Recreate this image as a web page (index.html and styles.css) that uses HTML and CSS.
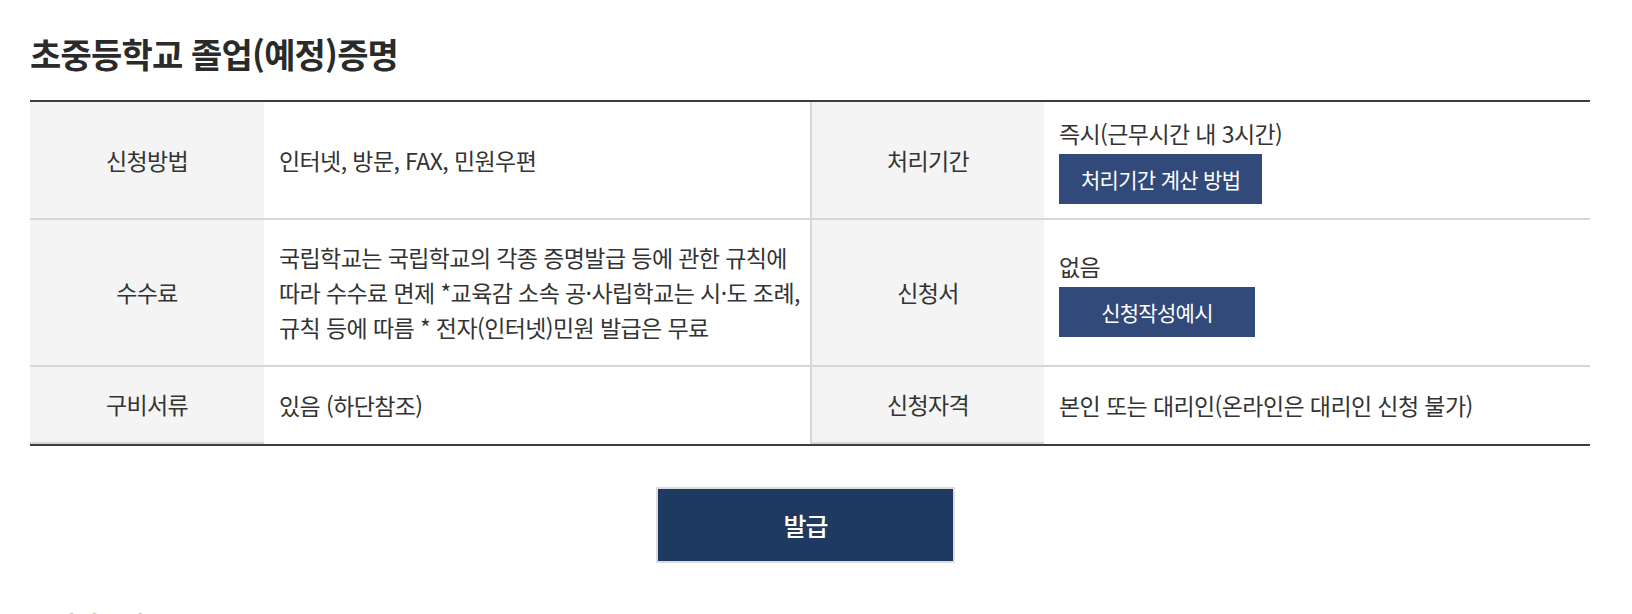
FILE: index.html
```html
<!DOCTYPE html>
<html lang="ko">
<head>
<meta charset="utf-8">
<title>초중등학교 졸업(예정)증명</title>
<link rel="stylesheet" href="styles.css">
</head>
<body>
<main class="page">
  <h2 class="title">초중등학교 졸업(예정)증명</h2>
  <table class="info">
    <colgroup>
      <col class="c-th"><col class="c-td"><col class="c-th"><col class="c-td">
    </colgroup>
    <tbody>
      <tr>
        <th>신청방법</th>
        <td>인터넷, 방문, FAX, 민원우편</td>
        <th class="th-split">처리기간</th>
        <td class="tight">
          <div class="line">즉시(근무시간 내 3시간)</div>
          <a class="sub-btn" href="#">처리기간 계산 방법</a>
        </td>
      </tr>
      <tr>
        <th>수수료</th>
        <td>국립학교는 국립학교의 각종 증명발급 등에 관한 규칙에 따라 수수료 면제 *교육감 소속 공·사립학교는 시·도 조례, 규칙 등에 따름 * 전자(인터넷)민원 발급은 무료</td>
        <th class="th-split">신청서</th>
        <td class="tight">
          <div class="line">없음</div>
          <a class="sub-btn" href="#">신청작성예시</a>
        </td>
      </tr>
      <tr class="last">
        <th>구비서류</th>
        <td>있음 (하단참조)</td>
        <th class="th-split">신청자격</th>
        <td>본인 또는 대리인(온라인은 대리인 신청 불가)</td>
      </tr>
    </tbody>
  </table>
  <div class="actions">
    <a class="issue-btn" href="#">발급</a>
  </div>
  <h3 class="section">법정근거</h3>
</main>
</body>
</html>
```

FILE: styles.css
```css
* { box-sizing: border-box; }

html, body {
  margin: 0;
  padding: 0;
  background: #fff;
}

body {
  font-family: "Noto Sans CJK KR", "Noto Sans", sans-serif;
  color: #333;
  overflow: hidden;
}

.page {
  padding: 0 42px 0 30px;
}

.title {
  margin: 0;
  padding-top: 33px;
  font-size: 34px;
  line-height: 42px;
  font-weight: 700;
  letter-spacing: -0.8px;
  color: #2a2a2a;
}

.info {
  margin-top: 25px;
  width: 100%;
  table-layout: fixed;
  border-collapse: separate;
  border-spacing: 0;
  border-top: 2px solid #3d3d3d;
  border-bottom: 2px solid #3d3d3d;
  font-size: 23px;
  line-height: 35px;
  letter-spacing: -0.6px;
  word-break: keep-all;
}

.c-th { width: 15%; }
.c-td { width: 35%; }

.info th,
.info td {
  padding: 20px 15px;
  vertical-align: middle;
  border-bottom: 2px solid #d6d6d6;
}

.info th {
  background: #f4f4f4;
  font-weight: 400;
  text-align: center;
  color: #333;
}

.info td {
  padding-right: 6px;
  text-align: left;
  color: #333;
}

.info .th-split {
  border-left: 2px solid #d6d6d6;
}

.info td.tight {
  padding-top: 14px;
  padding-bottom: 14px;
}

.info tr.last td {
  border-bottom: 0;
}

.sub-btn {
  display: inline-block;
  margin-top: 3px;
  min-width: 196px;
  height: 50px;
  padding: 0 22px;
  background: #314a7a;
  color: #fff;
  font-size: 21px;
  line-height: 50px;
  letter-spacing: -0.7px;
  text-align: center;
  text-decoration: none;
}

.actions {
  margin-top: 41px;
  text-align: center;
}

.issue-btn {
  display: inline-block;
  width: 299px;
  height: 76px;
  margin-right: 9px;
  border: 2px solid #dcdcdc;
  background: #1f3a60;
  color: #fff;
  font-size: 25px;
  font-weight: 500;
  line-height: 72px;
  letter-spacing: -1px;
  text-decoration: none;
}

.section {
  margin: 44px 0 0;
  padding-left: 22px;
  font-size: 26px;
  line-height: 36px;
  font-weight: 700;
  letter-spacing: -1px;
  color: #222;
}
```
